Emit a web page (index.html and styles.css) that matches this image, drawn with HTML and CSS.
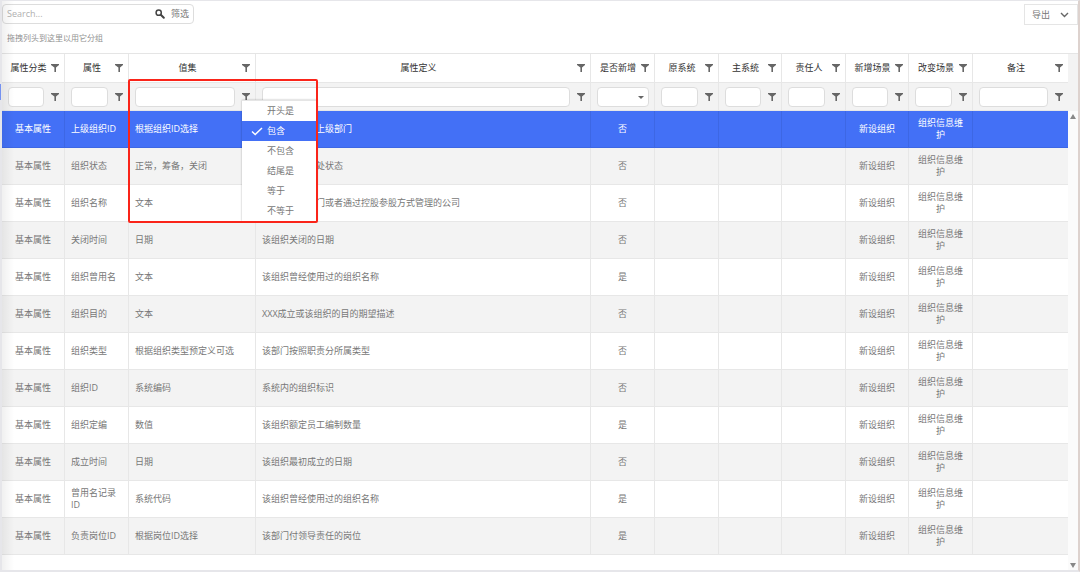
FILE: index.html
```html
<!DOCTYPE html>
<html lang="zh-CN">
<head>
<meta charset="utf-8">
<meta name="viewport" content="width=device-width, initial-scale=1">
<title>组织属性</title>
<link rel="stylesheet" href="styles.css">
</head>
<body>
<svg class="sprite" aria-hidden="true">
  <symbol id="funnel" viewBox="0 0 8 8"><path d="M0 0h8v1L5 3.6V8H3.4V3.6L0 1z"/></symbol>
</svg>
<main class="page">
  <div class="toolbar">
    <div class="search">
      <input class="search-input" type="text" placeholder="Search..." aria-label="Search">
      <button class="icon-btn" type="button" aria-label="搜索"><svg class="lens" viewBox="0 0 10 10"><circle cx="3.7" cy="3.7" r="2.6" fill="none" stroke="currentColor" stroke-width="1.5"/><path d="M5.8 5.8L8.8 8.8" stroke="currentColor" stroke-width="2" stroke-linecap="round"/></svg></button>
      <button class="text-btn" type="button">筛选</button>
    </div>
    <button class="export" type="button">导出<svg class="chevron" viewBox="0 0 9 6"><path d="M1 1l3.5 3.5L8 1" fill="none" stroke="currentColor" stroke-width="1.4"/></svg></button>
  </div>
  <p class="group-hint">拖拽列头到这里以用它分组</p>
  <div class="grid">
    <table class="table">
      <colgroup>
        <col class="c-narrow"><col class="c-std"><col class="c-values"><col class="c-definition"><col class="c-std"><col class="c-std"><col class="c-narrow"><col class="c-std"><col class="c-narrow"><col class="c-std"><col class="c-note">
      </colgroup>
      <thead>
        <tr class="head">
          <th scope="col"><div class="title"><span>属性分类</span><button class="icon-btn" type="button" aria-label="筛选属性分类"><svg class="funnel"><use href="#funnel"/></svg></button></div></th>
          <th scope="col"><div class="title"><span>属性</span><button class="icon-btn" type="button" aria-label="筛选属性"><svg class="funnel"><use href="#funnel"/></svg></button></div></th>
          <th scope="col"><div class="title"><span>值集</span><button class="icon-btn" type="button" aria-label="筛选值集"><svg class="funnel"><use href="#funnel"/></svg></button></div></th>
          <th scope="col"><div class="title"><span>属性定义</span><button class="icon-btn" type="button" aria-label="筛选属性定义"><svg class="funnel"><use href="#funnel"/></svg></button></div></th>
          <th scope="col"><div class="title"><span>是否新增</span><button class="icon-btn" type="button" aria-label="筛选是否新增"><svg class="funnel"><use href="#funnel"/></svg></button></div></th>
          <th scope="col"><div class="title"><span>原系统</span><button class="icon-btn" type="button" aria-label="筛选原系统"><svg class="funnel"><use href="#funnel"/></svg></button></div></th>
          <th scope="col"><div class="title"><span>主系统</span><button class="icon-btn" type="button" aria-label="筛选主系统"><svg class="funnel"><use href="#funnel"/></svg></button></div></th>
          <th scope="col"><div class="title"><span>责任人</span><button class="icon-btn" type="button" aria-label="筛选责任人"><svg class="funnel"><use href="#funnel"/></svg></button></div></th>
          <th scope="col"><div class="title"><span>新增场景</span><button class="icon-btn" type="button" aria-label="筛选新增场景"><svg class="funnel"><use href="#funnel"/></svg></button></div></th>
          <th scope="col"><div class="title"><span>改变场景</span><button class="icon-btn" type="button" aria-label="筛选改变场景"><svg class="funnel"><use href="#funnel"/></svg></button></div></th>
          <th scope="col"><div class="title"><span>备注</span><button class="icon-btn" type="button" aria-label="筛选备注"><svg class="funnel"><use href="#funnel"/></svg></button></div></th>
        </tr>
        <tr class="filters">
          <td><div class="filter"><input type="text" aria-label="属性分类"><button class="icon-btn" type="button" aria-label="属性分类条件"><svg class="funnel"><use href="#funnel"/></svg></button></div></td>
          <td><div class="filter"><input type="text" aria-label="属性"><button class="icon-btn" type="button" aria-label="属性条件"><svg class="funnel"><use href="#funnel"/></svg></button></div></td>
          <td>
            <div class="filter">
              <input type="text" aria-label="值集"><button class="icon-btn" type="button" aria-label="值集条件" aria-expanded="true"><svg class="funnel"><use href="#funnel"/></svg></button>
              <div class="menu" role="menu">
                <button class="menu-item" type="button" role="menuitemradio" aria-checked="false">开头是</button>
                <button class="menu-item selected" type="button" role="menuitemradio" aria-checked="true"><svg class="check" viewBox="0 0 12 9"><path d="M1 4.5l3.2 3L11 1" fill="none" stroke="currentColor" stroke-width="1.5"/></svg>包含</button>
                <button class="menu-item" type="button" role="menuitemradio" aria-checked="false">不包含</button>
                <button class="menu-item" type="button" role="menuitemradio" aria-checked="false">结尾是</button>
                <button class="menu-item" type="button" role="menuitemradio" aria-checked="false">等于</button>
                <button class="menu-item" type="button" role="menuitemradio" aria-checked="false">不等于</button>
              </div>
              <div class="highlight"></div>
            </div>
          </td>
          <td><div class="filter"><input type="text" aria-label="属性定义"><button class="icon-btn" type="button" aria-label="属性定义条件"><svg class="funnel"><use href="#funnel"/></svg></button></div></td>
          <td><div class="filter"><div class="select-wrap"><select aria-label="是否新增"><option></option><option>是</option><option>否</option></select></div></div></td>
          <td><div class="filter"><input type="text" aria-label="原系统"><button class="icon-btn" type="button" aria-label="原系统条件"><svg class="funnel"><use href="#funnel"/></svg></button></div></td>
          <td><div class="filter"><input type="text" aria-label="主系统"><button class="icon-btn" type="button" aria-label="主系统条件"><svg class="funnel"><use href="#funnel"/></svg></button></div></td>
          <td><div class="filter"><input type="text" aria-label="责任人"><button class="icon-btn" type="button" aria-label="责任人条件"><svg class="funnel"><use href="#funnel"/></svg></button></div></td>
          <td><div class="filter"><input type="text" aria-label="新增场景"><button class="icon-btn" type="button" aria-label="新增场景条件"><svg class="funnel"><use href="#funnel"/></svg></button></div></td>
          <td><div class="filter"><input type="text" aria-label="改变场景"><button class="icon-btn" type="button" aria-label="改变场景条件"><svg class="funnel"><use href="#funnel"/></svg></button></div></td>
          <td><div class="filter"><input type="text" aria-label="备注"><button class="icon-btn" type="button" aria-label="备注条件"><svg class="funnel"><use href="#funnel"/></svg></button></div></td>
        </tr>
      </thead>
      <tbody>
        <tr class="active"><td>基本属性</td><td>上级组织ID</td><td>根据组织ID选择</td><td class="beside-menu">上级部门</td><td>否</td><td></td><td></td><td></td><td>新设组织</td><td>组织信息维护</td><td></td></tr>
        <tr><td>基本属性</td><td>组织状态</td><td>正常，筹备，关闭</td><td class="beside-menu">处状态</td><td>否</td><td></td><td></td><td></td><td>新设组织</td><td>组织信息维护</td><td></td></tr>
        <tr><td>基本属性</td><td>组织名称</td><td>文本</td><td class="beside-menu">门或者通过控股参股方式管理的公司</td><td>否</td><td></td><td></td><td></td><td>新设组织</td><td>组织信息维护</td><td></td></tr>
        <tr><td>基本属性</td><td>关闭时间</td><td>日期</td><td>该组织关闭的日期</td><td>否</td><td></td><td></td><td></td><td>新设组织</td><td>组织信息维护</td><td></td></tr>
        <tr><td>基本属性</td><td>组织曾用名</td><td>文本</td><td>该组织曾经使用过的组织名称</td><td>是</td><td></td><td></td><td></td><td>新设组织</td><td>组织信息维护</td><td></td></tr>
        <tr><td>基本属性</td><td>组织目的</td><td>文本</td><td>XXX成立或该组织的目的期望描述</td><td>否</td><td></td><td></td><td></td><td>新设组织</td><td>组织信息维护</td><td></td></tr>
        <tr><td>基本属性</td><td>组织类型</td><td>根据组织类型预定义可选</td><td>该部门按照职责分所属类型</td><td>否</td><td></td><td></td><td></td><td>新设组织</td><td>组织信息维护</td><td></td></tr>
        <tr><td>基本属性</td><td>组织ID</td><td>系统编码</td><td>系统内的组织标识</td><td>否</td><td></td><td></td><td></td><td>新设组织</td><td>组织信息维护</td><td></td></tr>
        <tr><td>基本属性</td><td>组织定编</td><td>数值</td><td>该组织额定员工编制数量</td><td>是</td><td></td><td></td><td></td><td>新设组织</td><td>组织信息维护</td><td></td></tr>
        <tr><td>基本属性</td><td>成立时间</td><td>日期</td><td>该组织最初成立的日期</td><td>否</td><td></td><td></td><td></td><td>新设组织</td><td>组织信息维护</td><td></td></tr>
        <tr><td>基本属性</td><td>曾用名记录ID</td><td>系统代码</td><td>该组织曾经使用过的组织名称</td><td>是</td><td></td><td></td><td></td><td>新设组织</td><td>组织信息维护</td><td></td></tr>
        <tr><td>基本属性</td><td>负责岗位ID</td><td>根据岗位ID选择</td><td>该部门付领导责任的岗位</td><td>是</td><td></td><td></td><td></td><td>新设组织</td><td>组织信息维护</td><td></td></tr>
      </tbody>
    </table>
    <div class="gutter">
      <div class="gutter-head"></div>
      <div class="scrollbar"><span class="arrow up"></span><span class="arrow down"></span></div>
    </div>
  </div>
  <div class="edge-shade"></div>
  <div class="edge-mark"></div>
</main>
</body>
</html>
```

FILE: styles.css
```css
* {
  box-sizing: border-box;
}

body {
  margin: 0;
  background: #fff;
  color: #777;
  font: 9px/12px "Open Sans", "Noto Sans CJK SC", sans-serif;
}

button,
input,
select {
  margin: 0;
  padding: 0;
  border: 0;
  background: none;
  color: inherit;
  font: inherit;
}

button,
svg {
  display: block;
}

.sprite {
  position: absolute;
  width: 0;
  height: 0;
}

.page {
  position: relative;
  display: flex;
  flex-direction: column;
  min-height: 100vh;
  border: solid #e6e6ea;
  border-width: 1px 2px 2px;
  border-right-color: #ddd2ce;
}

.toolbar {
  display: flex;
  justify-content: space-between;
  padding-top: 3px;
}

.search {
  display: flex;
  align-items: center;
  width: 192px;
  height: 20px;
  padding: 0 4px;
  border: 1px solid #ddd;
  border-radius: 4px;
}

.search-input {
  flex: 1;
  min-width: 0;
  outline: 0;
}

.search-input::placeholder {
  color: #b0b0b0;
}

.lens {
  width: 10px;
  height: 10px;
  color: #444;
}

.text-btn {
  margin-left: 6px;
}

.export {
  display: flex;
  align-items: center;
  justify-content: space-between;
  width: 54px;
  height: 21px;
  padding: 0 8px 0 7px;
  border: 1px solid #e5e5e5;
}

.chevron {
  width: 9px;
  height: 6px;
  color: #666;
}

.group-hint {
  margin: 7px 5px 9px;
  color: #929292;
  font-size: 8px;
}

.grid {
  display: flex;
  flex: 1;
}

.table {
  flex: 1;
  align-self: flex-start;
  width: 100%;
  table-layout: fixed;
  border-spacing: 0;
  border-top: 1px solid #e5e5e5;
}

.c-narrow {
  width: 63px;
}

.c-std {
  width: 64px;
}

.c-values {
  width: 127px;
}

.c-note {
  width: 95px;
}

th,
td {
  padding: 0;
  border: solid #e7e7e7;
  border-width: 0 1px 1px 0;
  font-weight: 400;
}

tr > :last-child {
  border-right: 0;
}

.head th {
  height: 29px;
  color: #333;
}

.title,
.filter {
  display: flex;
  align-items: center;
}

.title {
  gap: 3px;
  padding: 0 5px 0 7px;
}

.title span {
  flex: 1;
  text-align: center;
  white-space: nowrap;
}

.funnel {
  width: 8px;
  height: 8px;
  fill: #666;
}

.filters td {
  height: 28px;
  background: #f3f3f3;
}

.filter {
  position: relative;
  gap: 7px;
  padding: 0 5px 0 6px;
}

.filter input,
.filter select {
  flex: 1;
  width: 100%;
  min-width: 0;
  height: 20px;
  padding: 0 4px;
  border: 1px solid #ddd;
  border-radius: 4px;
  background: #fff;
}

.filter select {
  display: block;
  appearance: none;
}

.select-wrap {
  position: relative;
  flex: 1;
}

.select-wrap::after {
  content: "";
  position: absolute;
  top: 9px;
  right: 5px;
  border: solid transparent;
  border-width: 3px 3px 0;
  border-top-color: #666;
}

.menu {
  position: absolute;
  top: 13px;
  left: 113px;
  z-index: 1;
  width: 75px;
  border-top: 1px solid #e5e5e5;
  background: #fff;
  box-shadow: 0 0 2px rgba(0, 0, 0, 0.3);
}

.menu-item {
  position: relative;
  width: 100%;
  height: 20px;
  padding-left: 25px;
  text-align: left;
}

.menu-item.selected {
  background: #4370f6;
  color: #fff;
}

.check {
  position: absolute;
  top: 6px;
  left: 9px;
  width: 12px;
  height: 9px;
}

.highlight {
  position: absolute;
  top: -8px;
  left: -1px;
  z-index: 2;
  width: 190px;
  height: 144px;
  border: 2px solid #fa2419;
  border-radius: 2px;
  pointer-events: none;
}

tbody td {
  height: 37px;
  padding: 0 6px;
}

tbody td:first-child,
tbody td:nth-child(n + 5) {
  text-align: center;
}

tbody tr:nth-child(even) {
  background: #f3f3f3;
}

tbody .active {
  background: #4370f6;
  color: #fff;
}

.active td {
  border-color: #3d67e4;
}

tbody .beside-menu {
  padding-left: 60px;
}

.gutter {
  display: flex;
  flex-direction: column;
  width: 10px;
}

.gutter-head {
  height: 58px;
  border-top: 1px solid #e5e5e5;
  background: #f3f3f3;
}

.scrollbar {
  display: flex;
  flex: 1;
  flex-direction: column;
  align-items: center;
  justify-content: space-between;
  padding: 3px 0 2px;
  background: #fbfbfb;
}

.arrow {
  border: solid transparent;
}

.up {
  border-width: 0 3px 5px;
  border-bottom-color: #888;
}

.down {
  border-width: 5px 3px 0;
  border-top-color: #888;
}

.edge-shade {
  position: absolute;
  inset: 0 auto 0 0;
  width: 12px;
  background: linear-gradient(to right, rgba(0, 0, 0, 0.06), transparent);
  pointer-events: none;
}

.edge-mark {
  position: absolute;
  top: 83px;
  left: -2px;
  width: 1px;
  height: 16px;
  background: #7592f0;
}
```
